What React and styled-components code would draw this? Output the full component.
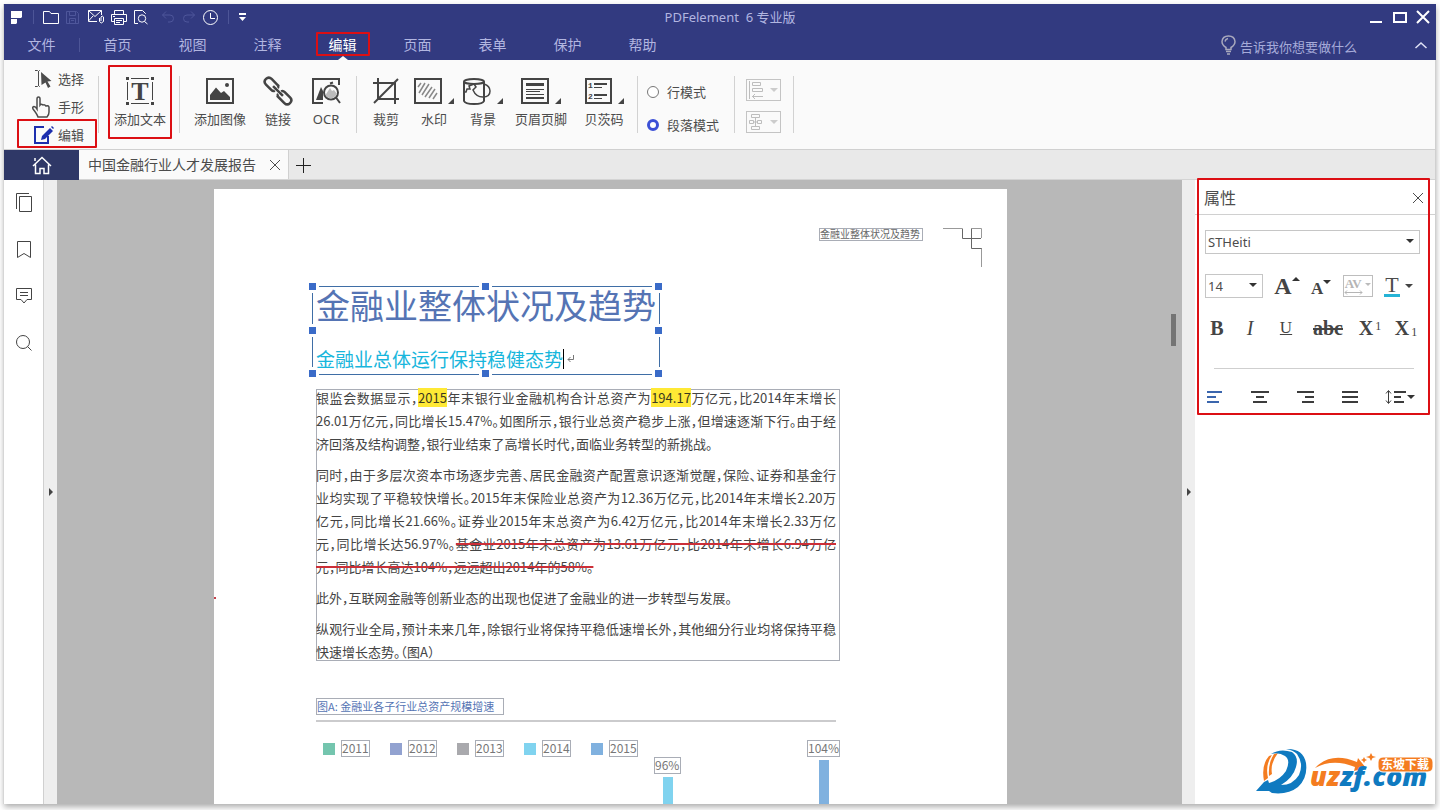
import React from 'react';
import styled, { createGlobalStyle, css } from 'styled-components';

const ui = '"Noto Sans", "Noto Sans CJK SC", sans-serif';
const cjk = '"Noto Sans CJK SC", "Noto Sans", sans-serif';
const serif = '"Liberation Serif", serif';

const GlobalStyle = createGlobalStyle`
  *, *::before, *::after { box-sizing: border-box; }
  body { margin: 0; background: #fff; font-family: ${ui}; color: #4c4c4c; overflow: hidden; }
  button, input, select { font-family: inherit; color: inherit; margin: 0; }
  button { border: 0; background: none; padding: 0; cursor: pointer; }
  svg { display: block; flex: none; overflow: visible; }
`;

/* ---------- shell ---------- */
const Screen = styled.div`
  display: flex;
  height: 100vh;
  padding: 4px 4px 6px;
`;
const AppWindow = styled.div`
  position: relative;
  display: flex;
  flex-direction: column;
  flex: 1;
  min-width: 0;
  background: #fff;
  box-shadow: -1px 0 0 #d6d6d6, 0 3px 6px rgba(0, 0, 0, 0.32);
`;
const WorkArea = styled.div`
  display: flex;
  flex-direction: column;
  flex: 1;
  min-height: 0;
  border-right: 1px solid #d0d0d0;
`;
const Callout = styled.span`
  position: absolute;
  inset: ${(p) => p.$inset || '0'};
  border: 2px solid #dc0f14;
  border-radius: 1px;
  pointer-events: none;
  z-index: 2;
`;

/* ---------- title bar ---------- */
const Header = styled.header`
  background: #323a80;
  color: #b2b6e0;
`;
const TitleRow = styled.div`
  display: grid;
  grid-template-columns: 1fr auto 1fr;
  align-items: center;
  height: 26px;
`;
const QuickBar = styled.div`
  display: flex;
  align-items: center;
  padding-left: 7px;
`;
const QuickButton = styled.button`
  display: flex;
  justify-content: center;
  width: ${(p) => p.$w || 23}px;
  color: #fff;
  &:disabled { color: #4e569b; }
`;
const BarDivider = styled.span`
  width: 1px;
  height: 14px;
  margin: ${(p) => p.$m || '0'};
  background: #4d5597;
`;
const AppTitle = styled.h1`
  margin: 0;
  padding-left: 20px;
  font-size: 13px;
  font-weight: 400;
  line-height: 20px;
  white-space: pre;
`;
const WindowButtons = styled.div`
  display: flex;
  justify-content: flex-end;
  align-items: center;
  gap: 10px;
  padding-right: 7px;
  color: #fff;
`;
const MenuRow = styled.nav`
  display: flex;
  align-items: center;
  height: 30px;
`;
const MenuItem = styled.button`
  position: relative;
  width: 75px;
  height: 30px;
  font-size: 14px;
  line-height: 30px;
  color: ${(p) => (p.$active ? '#fff' : '#b2b6e0')};
  ${(p) => p.$active && css`
    &::after {
      content: '';
      position: absolute;
      left: 50%;
      bottom: 0;
      margin-left: -5px;
      border: 5px solid transparent;
      border-top: 0;
      border-bottom: 4px solid #fafafa;
    }
  `}
`;
const TellMe = styled.label`
  display: flex;
  align-items: center;
  gap: 4px;
  margin-left: auto;
`;
const TellInput = styled.input`
  width: 120px;
  height: 24px;
  margin-top: 3px;
  padding: 0;
  border: 0;
  background: none;
  outline: 0;
  font-size: 13px;
  &::placeholder { color: #a6abd9; opacity: 1; }
`;
const CollapseButton = styled.button`
  margin: 0 9px 0 55px;
  color: #dfe1f5;
`;

/* ---------- ribbon ---------- */
const Ribbon = styled.div`
  display: flex;
  align-items: flex-start;
  height: 90px;
  background: #fafafa;
  border-bottom: 1px solid #d0d0d0;
`;
const RibbonDivider = styled.span`
  width: 1px;
  height: 57px;
  margin-top: 16px;
  background: #d2d2d2;
`;
const ToolColumn = styled.div`
  display: flex;
  flex-direction: column;
  width: 81px;
  margin: 5px 0 0 13px;
  padding-right: 1px;
`;
const ToolRow = styled.button`
  position: relative;
  display: flex;
  align-items: center;
  gap: 4px;
  height: 28px;
  padding-left: 15px;
  font-size: 13px;
  line-height: 20px;
`;
const Group = styled.div`
  display: flex;
  padding: ${(p) => p.$pad};
`;
const RibbonButton = styled.button`
  position: relative;
  display: flex;
  flex-direction: column;
  align-items: center;
  width: ${(p) => p.$w}px;
  height: 74px;
  padding-top: 11px;
  font-size: 13px;
  line-height: 20px;
  white-space: nowrap;
`;
const RibbonIcon = styled.span`
  display: flex;
  align-items: center;
  gap: 6px;
  height: 30px;
  margin-bottom: 3px;
  color: #444;
`;
const DropCorner = styled.span`
  align-self: flex-end;
  margin-bottom: 2px;
  border: 3px solid transparent;
  border-right-color: #444;
  border-bottom-color: #444;
`;
const ModeGroup = styled.fieldset`
  width: 96px;
  margin: 0;
  padding: 15px 0 0 9px;
  border: 0;
`;
const ModeLabel = styled.label`
  display: flex;
  align-items: center;
  gap: 8px;
  height: 33px;
  font-size: 13px;
`;
const Radio = styled.input`
  appearance: none;
  width: 12px;
  height: 12px;
  border: 1px solid #777;
  border-radius: 50%;
  background: #fff;
  &:checked { border: 3px solid #3c50d6; }
`;
const AlignGroup = styled.div`
  display: flex;
  flex-direction: column;
  gap: 10px;
  padding: 19px 12px 0 11px;
`;
const AlignButton = styled.button`
  display: flex;
  align-items: center;
  justify-content: space-between;
  width: 35px;
  height: 22px;
  padding: 0 2px 0 1px;
  border: 1px solid #c4c4c4;
  color: #bdbdbd;
`;
const Caret = styled.span`
  display: block;
  flex: none;
  width: 0;
  margin-top: ${(p) => p.$t || 0}px;
  border: ${(p) => p.$s || 4}px solid transparent;
  border-top-color: ${(p) => p.$c || '#333'};
  border-bottom: 0;
`;

/* ---------- tabs ---------- */
const TabStrip = styled.div`
  display: flex;
  height: 30px;
  background: #e9e9e9;
  border-bottom: 1px solid #d4d4d4;
`;
const HomeTab = styled.button`
  display: flex;
  align-items: center;
  justify-content: center;
  width: 75px;
  height: 30px;
  color: #fff;
  background: #2f3867;
`;
const DocTab = styled.div`
  display: flex;
  align-items: center;
  gap: 14px;
  padding: 0 8px 0 9px;
  background: #fafafa;
  border-right: 1px solid #d0d0d0;
  font-size: 14px;
  line-height: 29px;
`;
const NewTab = styled.button`
  margin-left: 6px;
  color: #222;
`;

/* ---------- main ---------- */
const Main = styled.div`
  display: flex;
  flex: 1;
  min-height: 0;
`;
const Rail = styled.aside`
  display: flex;
  flex-direction: column;
  align-items: center;
  gap: 19px;
  width: 40px;
  padding-top: 8px;
  border-right: 1px solid #d0d0d0;
`;
const RailButton = styled.button`
  display: flex;
  align-items: center;
  justify-content: center;
  width: 28px;
  height: 28px;
  color: #444;
`;
const Gutter = styled.button`
  display: flex;
  align-items: center;
  justify-content: center;
  flex: none;
  width: 13px;
  background: #eee;
`;
const GutterArrow = styled.span`
  border: 4px solid transparent;
  border-left-color: #444;
  border-right: 0;
`;
const Viewer = styled.main`
  display: flex;
  flex: 1;
  min-width: 0;
  background: #b8b8b8;
  overflow: hidden;
`;
const Canvas = styled.div`
  display: flex;
  flex: 1;
  justify-content: center;
  align-items: flex-start;
  padding-top: 9px;
`;
const ScrollTrack = styled.div`
  width: 18px;
  padding: 134px 0 0 7px;
`;
const ScrollThumb = styled.div`
  width: 5px;
  height: 32px;
  background: #747474;
`;
const Page = styled.article`
  position: relative;
  width: 793px;
  padding: 39px 25px 60px 102px;
  background: #fff;
  font-family: ${cjk};
  &::before {
    content: '';
    position: absolute;
    left: 0;
    top: 408px;
    width: 2px;
    height: 2px;
    background: #c5404a;
  }
`;
const PageHead = styled.div`
  display: flex;
  justify-content: flex-end;
  align-items: flex-start;
  gap: 20px;
`;
const Boxed = styled.span`
  display: block;
  border: 1px solid #a9adb6;
  white-space: nowrap;
`;
const RunningTitle = styled(Boxed)`
  width: 104px;
  height: 13px;
  font-size: 10px;
  line-height: 10px;
  color: #666;
`;
const Selection = styled.section`
  position: relative;
  z-index: 0;
  width: 348px;
  height: 89px;
  margin: 19px 0 14px -4px;
  padding-left: 3px;
  border: 1px solid #3f6ea6;
`;
const Handle = styled.span`
  position: absolute;
  z-index: -1;
  left: ${(p) => p.$x};
  top: ${(p) => p.$y};
  width: 7px;
  height: 7px;
  margin: -4px 0 0 -4px;
  background: #3a6bc8;
  box-shadow: 0 0 0 3px #fff;
`;
const DocTitle = styled.h2`
  margin: 0;
  font-size: 34px;
  font-weight: 400;
  line-height: 36px;
  color: #5574b4;
  white-space: nowrap;
`;
const DocSubtitle = styled.h3`
  display: flex;
  align-items: center;
  margin: 26px 0 0;
  font-size: 19px;
  font-weight: 400;
  line-height: 20px;
  color: #18b6dc;
  white-space: nowrap;
`;
const TextCursor = styled.span`
  width: 1px;
  height: 20px;
  margin-right: 3px;
  background: #000;
`;
const BodyBox = styled.section`
  width: 524px;
  padding-right: 3px;
  border: 1px solid #a9adb6;
`;
const BodyText = styled.div`
  display: flex;
  flex-direction: column;
  gap: 8px;
  margin: -4px 0 -3px -1px;
  font-size: 13px;
  line-height: 23px;
  color: #444;
  font-feature-settings: 'halt';
`;
const Para = styled.p`
  margin: 0;
`;
const Line = styled.span`
  display: block;
  text-align: justify;
  text-align-last: ${(p) => (p.$last ? 'left' : 'justify')};
`;
const Highlight = styled.mark`
  color: #3c3a20;
  background: #ffe935;
`;
const Struck = styled.s`
  text-decoration: line-through 2px #cc2f38;
`;
const Figure = styled.figure`
  width: 520px;
  margin: 37px 0 0;
`;
const Caption = styled.figcaption`
  width: 188px;
  height: 17px;
  border: 1px solid #a9adb6;
  font-size: 11px;
  line-height: 15px;
  color: #5574b4;
  white-space: nowrap;
`;
const Rule = styled.hr`
  height: 2px;
  margin: 5px 0 18px;
  border: 0;
  background: #cbcbcd;
`;
const Chart = styled.div`
  display: flex;
  align-items: flex-start;
`;
const Legend = styled.ul`
  display: flex;
  gap: 20px;
  margin: 0;
  padding: 0 0 0 7px;
  list-style: none;
`;
const LegendItem = styled.li`
  display: flex;
  align-items: center;
  gap: 6px;
`;
const Swatch = styled.span`
  width: 12px;
  height: 12px;
  background: ${(p) => p.$c};
`;
const Figures = styled(Boxed)`
  width: ${(p) => p.$w || 29}px;
  height: 17px;
  font-size: 12px;
  line-height: 14px;
  color: #777;
`;
const BarColumn = styled.div`
  display: flex;
  flex-direction: column;
  align-items: center;
  gap: 3px;
  margin: ${(p) => p.$m};
`;
const Bar = styled.div`
  width: 10px;
  height: 180px;
  background: ${(p) => p.$c};
`;

/* ---------- properties ---------- */
const Panel = styled.aside`
  position: relative;
  flex: none;
  width: 240px;
`;
const PanelCallout = styled(Callout)`
  height: 237px;
`;
const PanelHead = styled.div`
  display: flex;
  align-items: center;
  justify-content: space-between;
  height: 35px;
  padding: 2px 12px 0 9px;
  border-bottom: 1px solid #d0d0d0;
`;
const PanelTitle = styled.h2`
  margin: 0;
  font-size: 16px;
  font-weight: 400;
  line-height: 24px;
`;
const PanelBody = styled.div`
  display: flex;
  flex-direction: column;
  padding: 15px 15px 0 10px;
`;
const SelectWrap = styled.label`
  position: relative;
  display: block;
  width: ${(p) => p.$w || '100%'};
`;
const Select = styled.select`
  appearance: none;
  display: block;
  width: 100%;
  height: 24px;
  padding: 0 2px;
  border: 1px solid #c6c6c6;
  border-radius: 0;
  background: #fff;
  font-size: 13px;
`;
const SelectArrow = styled(Caret)`
  position: absolute;
  right: 6px;
  top: 9px;
  pointer-events: none;
`;
const SizeRow = styled.div`
  display: flex;
  align-items: center;
  justify-content: space-between;
  height: 24px;
  margin-top: 20px;
  padding-right: 7px;
`;
const Glyph = styled.button`
  display: flex;
  align-items: ${(p) => p.$align || 'baseline'};
  justify-content: center;
  width: ${(p) => (p.$w ? p.$w + 'px' : 'auto')};
  padding-top: ${(p) => p.$drop || 0}px;
  font-family: ${serif};
  font-size: ${(p) => p.$size || 20}px;
  font-weight: ${(p) => p.$weight || 700};
  line-height: 24px;
  color: #444;
`;
const GlyphMark = styled.span`
  align-self: flex-start;
  margin-top: 3px;
`;
const UpCaret = styled(Caret)`
  border-top: 0;
  border-bottom: 4px solid #333;
`;
const Spacing = styled.button`
  position: relative;
  display: flex;
  gap: 3px;
  width: 30px;
  height: 22px;
  padding: 0 0 0 1px;
  border: 1px solid #bdbdbd;
  color: #b5b5b5;
  font-family: ${serif};
  font-size: 13px;
  font-weight: 700;
  line-height: 15px;
`;
const SpacingArrow = styled.span`
  position: absolute;
  left: 0;
  bottom: 1px;
`;
const ColorButton = styled.button`
  display: flex;
  align-items: center;
  gap: 5px;
  width: 29px;
`;
const ColorLetter = styled.span`
  width: 17px;
  border-bottom: 3px solid #25b3d6;
  font-family: ${serif};
  font-size: 22px;
  line-height: 18px;
`;
const StyleRow = styled.div`
  display: flex;
  align-items: center;
  height: 28px;
  margin: 16px -7px 0 0;
`;
const Small = styled.span`
  font-size: 12px;
  font-weight: 400;
  line-height: 12px;
  align-self: ${(p) => (p.$sub ? 'flex-end' : 'flex-start')};
  margin: 4px 0 2px 2px;
`;
const PanelRule = styled.hr`
  width: 200px;
  height: 1px;
  margin: 26px 0 18px 9px;
  border: 0;
  background: #cfcfcf;
`;
const AlignRow = styled.div`
  display: flex;
  align-items: center;
  justify-content: space-between;
  height: 20px;
  padding: 0 5px 0 2px;
`;
const ParaButton = styled.button`
  display: flex;
  align-items: center;
  gap: 1px;
  color: ${(p) => (p.$on ? '#3b66ad' : '#3c3c3c')};
`;

const Watermark = styled.a`
  position: absolute;
  right: 1px;
  bottom: 5px;
  z-index: 3;
`;

/* ---------- icons ---------- */
const Svg = ({ w, h, sw = 1, children }) => (
  <svg width={w} height={h} viewBox={`0 0 ${w} ${h}`} fill="none" stroke="currentColor" strokeWidth={sw} aria-hidden="true">
    {children}
  </svg>
);
const Cross = ({ s = 10, sw = 1 }) => (
  <Svg w={s} h={s} sw={sw}><path d={`M0 0L${s} ${s}M${s} 0L0 ${s}`} /></Svg>
);
const LinesIcon = ({ w, rows }) => (
  <Svg w={w} h={12} sw={2}>
    {rows.map(([a, b], i) => <path key={i} d={`M${a} ${1 + (i * 10) / (rows.length - 1)}H${b}`} />)}
  </Svg>
);

const RibbonIcons = {
  text: (
    <Svg w={28} h={28}>
      <path d="M5 1.500H23M5 26.500H23M1.500 5V23M26.500 5V23" />
      <path fill="currentColor" stroke="none" d="M0 0h3v3h-3zM25 0h3v3h-3zM0 25h3v3h-3zM25 25h3v3h-3z" />
      <text x="14" y="23" textAnchor="middle" fill="currentColor" stroke="none" fontFamily="Liberation Serif, serif" fontWeight="700" fontSize="26">T</text>
    </Svg>
  ),
  image: (
    <Svg w={28} h={26} sw={2}>
      <path d="M1 1H27V25H1Z" />
      <path fill="currentColor" stroke="none" d="M4 22V17L10 9.500L15 15L18 13L24 19V22Z" />
      <circle cx="21" cy="7" r="2" fill="currentColor" stroke="none" />
    </Svg>
  ),
  link: (
    <Svg w={28} h={28} sw={2.5}>
      <g transform="rotate(45 14 14)">
        <path d="M10 10.500V10Q10 10 8.500 10H1Q-3 10 -3 14Q-3 18 1 18H8.500Q11 18 11.500 16" />
        <path d="M18 17.500V18H27Q31 18 31 14Q31 10 27 10H19.500Q17 10 16.500 12" />
        <path d="M7 14H21" />
        <path d="M10 10Q12 11 12 12M18 18Q16 17 16 16" />
      </g>
    </Svg>
  ),
  ocr: (
    <Svg w={28} h={26} sw={2}>
      <path d="M11 25H1V1H27V7" />
      <path fill="currentColor" stroke="none" d="M4 22L9 9L11 13V22Z" />
      <circle cx="19" cy="14.500" r="7" fill="#fafafa" />
      <path fill="#bbb" stroke="none" d="M13.500 17L18 10L20 13L22 12L25 16Q22 20.500 18 20.500Q15 20 13.500 17Z" />
      <path d="M24 19.500L28 25M18 5.500L21 4.500" />
    </Svg>
  ),
  crop: (
    <Svg w={26} h={26} sw={2}>
      <path d="M0 5H22V26M5 0V21H26" />
      <path d="M1 25L25 1" />
    </Svg>
  ),
  watermark: (
    <Svg w={28} h={26} sw={2}>
      <path d="M1 1H27V25H1Z" />
      <path stroke="#888" strokeWidth="1.500" d="M4 9L7 5M5 15L11 5M8 17L15 6M11 19L18 9M15 20L21 11M19 21L23 15" />
    </Svg>
  ),
  background: (
    <Svg w={28} h={27} sw={2}>
      <ellipse cx="11" cy="3.500" rx="10" ry="2.500" />
      <path d="M1 3.500V23Q2 26 11 26Q20 26 21 23V3.500" />
      <path d="M1 14H3L4 11H7L6 8L11 6L13 9L10 12Q13 19 20 19Q27 19 27 13Q27 8 21 6" strokeWidth="1.500" />
    </Svg>
  ),
  header: (
    <Svg w={28} h={26} sw={2}>
      <path d="M1 1H27V25H1Z" />
      <path strokeWidth="3" d="M5 6.500H23" />
      <path strokeWidth="1" d="M5 11.500H23M5 13.500H19M5 16.500H23" />
      <path d="M5 20H23" />
    </Svg>
  ),
  bates: (
    <Svg w={27} h={26} sw={2}>
      <path d="M1 1H26V25H1Z" />
      <path d="M9 6H22M9 17H22" />
      <path strokeWidth="1" d="M9 9.500H17M9 20.500H17" />
      <g fill="currentColor" stroke="none" fontFamily="Liberation Mono, monospace" fontWeight="700" fontSize="8">
        <text x="3" y="10">1</text>
        <text x="3" y="21">2</text>
      </g>
    </Svg>
  ),
};

const QuickIcons = {
  logo: <Svg w={11} h={13}><path fill="#fff" stroke="none" d="M0 0H11V6L10 7H0ZM0 8H6V12L5 13H0Z" /></Svg>,
  open: <Svg w={16} h={13}><path d="M.5 12.500V.5H6.500L8 2.500H15.500V12.500Z" /></Svg>,
  save: <Svg w={13} h={13}><path d="M.5 .5H10.500L12.500 2.500V12.500H.5ZM3.500 .5V4.500H9.500V.5M3.500 12.500V7.500H9.500V12.500M5 9.500H8" /></Svg>,
  mail: <Svg w={16} h={14}><path d="M9 11.500H.5V.5H13.500V5M.5 .5L7 6.500L13.500 .5M.5 11L5 6M11.500 8V11.500Q13 14.500 15.500 11.500V7Q14 5 13 7V11" /></Svg>,
  print: <Svg w={16} h={15}><path d="M3.500 4V.5H12.500V4M3 11.500H.5V4.500H15.500V11.500H13M3.500 8.500H12.500V14.500H3.500ZM5 10.500H11M5 12.500H9M2 6.500H4" /></Svg>,
  find: <Svg w={14} h={14}><path d="M4 13.500H.5V.5H8.500L11.500 3.500V4" /><circle cx="8" cy="8.500" r="3.700" /><path d="M10.500 11.500L13.500 14" /></Svg>,
  undo: <Svg w={12} h={12}><path d="M4 .5L.5 4L4 7.500M.5 4H8Q11.500 4 11.500 7.500Q11.500 11 8 11H6" /></Svg>,
  redo: <Svg w={12} h={12}><path d="M8 .5L11.500 4L8 7.500M11.500 4H4Q.5 4 .5 7.500Q.5 11 4 11H6" /></Svg>,
  clock: <Svg w={15} h={15}><circle cx="7.500" cy="7.500" r="7" /><path d="M7.500 3V8.500H12" /></Svg>,
  more: <Svg w={7} h={8}><path d="M0 1H7" strokeWidth="2" /><path fill="currentColor" stroke="none" d="M0 4H7L3.500 8Z" /></Svg>,
};

const quick = [
  ['打开', 'open', 23], ['保存', 'save', 20, true], ['邮件', 'mail', 28], ['打印', 'print', 18],
  ['查找', 'find', 26], ['撤销', 'undo', 27, true], ['重做', 'redo', 15, true], ['历史', 'clock', 29],
];
const menus = ['首页', '视图', '注释', '编辑', '页面', '表单', '保护', '帮助'];
const legend = [['2011', '#74c5ae'], ['2012', '#92a2d0'], ['2013', '#a9a9ad'], ['2014', '#80d3ef'], ['2015', '#80b1df']];
const handles = [['0', '0'], ['50%', '0'], ['100%', '0'], ['0', '50%'], ['100%', '50%'], ['0', '100%'], ['50%', '100%'], ['100%', '100%']];

const Tool = ({ icon, label, w, drop, callout }) => (
  <RibbonButton $w={w}>
    <RibbonIcon>{RibbonIcons[icon]}{drop && <DropCorner />}</RibbonIcon>
    {label}
    {callout && <Callout />}
  </RibbonButton>
);

function TitleBar() {
  return (
    <Header>
      <TitleRow>
        <QuickBar>
          {QuickIcons.logo}
          <BarDivider $m="0 5px 0 11px" />
          {quick.map(([label, icon, w, off]) => (
            <QuickButton key={label} $w={w} disabled={off} aria-label={label}>{QuickIcons[icon]}</QuickButton>
          ))}
          <BarDivider $m="0 0 0 3px" />
          <QuickButton $w={27} aria-label="更多">{QuickIcons.more}</QuickButton>
        </QuickBar>
        <AppTitle>{'PDFelement  6 专业版'}</AppTitle>
        <WindowButtons>
          <button aria-label="最小化"><Svg w={14} h={12} sw={2}><path d="M1 11H13" /></Svg></button>
          <button aria-label="最大化"><Svg w={14} h={11} sw={2}><path d="M1 1H13V10H1Z" /></Svg></button>
          <button aria-label="关闭"><Cross s={12} sw={2} /></button>
        </WindowButtons>
      </TitleRow>
      <MenuRow>
        <MenuItem>文件</MenuItem>
        <BarDivider />
        {menus.map((m) => (
          <MenuItem key={m} $active={m === '编辑'}>
            {m}
            {m === '编辑' && <Callout $inset="2px 10px 4px 11px" />}
          </MenuItem>
        ))}
        <TellMe>
          <Svg w={15} h={20}>
            <path stroke="#a9a9bd" strokeWidth="1.500" d="M5 14.500V12.500Q1 10 1 6.500Q1.500 1 7.500 1Q13.500 1 14 6.500Q14 10 10 12.500V14.500ZM4 6.500Q4.500 4 7 3.500M5 16.500H10M6 19H9" />
          </Svg>
          <TellInput placeholder="告诉我你想要做什么" aria-label="告诉我你想要做什么" />
        </TellMe>
        <CollapseButton aria-label="收起"><Svg w={12} h={7}><path strokeWidth="1.500" d="M.5 6L6 1L11.500 6" /></Svg></CollapseButton>
      </MenuRow>
    </Header>
  );
}

function RibbonBar() {
  return (
    <Ribbon>
      <ToolColumn>
        <ToolRow>
          <Svg w={22} h={20}>
            <path d="M3 1.500H5.500L6.500 2.500L7.500 1.500H8M6.500 2V17M3 17.500H5.500L6.500 16.500L7.500 17.500H8" />
            <path fill="currentColor" stroke="none" d="M9 3L19.500 12L15.500 12.500L18.500 17.500L16 19L13.500 13.500L9.500 16Z" />
          </Svg>
          选择
        </ToolRow>
        <ToolRow>
          <Svg w={22} h={22}>
            <path strokeWidth="1.500" d="M5 13V3Q5 1 6.500 1Q8 1 8 3V9Q9 7.500 11 9Q12.500 8 14 10Q16 9 17 11V16Q17 19 15 21H6Q5 18 1 13Q0 11 2 10.500Q3.500 10.500 5 13Z" />
          </Svg>
          手形
        </ToolRow>
        <ToolRow>
          <Svg w={22} h={20}>
            <path stroke="#1d2fae" strokeWidth="2" d="M12 2H3V18H16V11" />
            <path fill="#1d2fae" stroke="none" d="M9 15L10 11L18 3L21 6L13 14ZM19 2L20 1L22 3L21 4Z" />
          </Svg>
          编辑
          <Callout $inset="-2px 0 1px 0" />
        </ToolRow>
      </ToolColumn>
      <RibbonDivider />
      <Group $pad="5px 7px 0 9px">
        <Tool icon="text" label="添加文本" w={64} callout />
      </Group>
      <RibbonDivider />
      <Group $pad="5px 7px 0 7px">
        <Tool icon="image" label="添加图像" w={66} />
        <Tool icon="link" label="链接" w={50} />
        <Tool icon="ocr" label="OCR" w={46} />
      </Group>
      <RibbonDivider />
      <Group $pad="5px 4px 0 6px">
        <Tool icon="crop" label="裁剪" w={46} />
        <Tool icon="watermark" label="水印" w={50} drop />
        <Tool icon="background" label="背景" w={48} drop />
        <Tool icon="header" label="页眉页脚" w={68} drop />
        <Tool icon="bates" label="贝茨码" w={58} drop />
      </Group>
      <RibbonDivider />
      <ModeGroup>
        <ModeLabel><Radio type="radio" name="mode" />行模式</ModeLabel>
        <ModeLabel><Radio type="radio" name="mode" defaultChecked />段落模式</ModeLabel>
      </ModeGroup>
      <RibbonDivider />
      <AlignGroup>
        <AlignButton aria-label="对齐">
          <Svg w={18} h={18}><path d="M1.500 0V18M4.500 1.500H12.500V4.500H4.500ZM4.500 7.500H14.500V10.500H4.500ZM4 15.500H15M7 13L4.500 15.500L7 18" /></Svg>
          <Caret $c="#ccc" />
        </AlignButton>
        <AlignButton aria-label="分布">
          <Svg w={18} h={18}><path d="M3.500 1.500H11.500V4.500H3.500ZM1.500 7.500H5.500V10.500H1.500ZM9.500 7.500H13.500V10.500H9.500ZM3.500 13.500H11.500V16.500H3.500ZM7.500 4.500V13.500M5.500 9H9.500" /></Svg>
          <Caret $c="#ccc" />
        </AlignButton>
      </AlignGroup>
      <RibbonDivider />
    </Ribbon>
  );
}

function DocumentPage() {
  return (
    <Page>
      <PageHead>
        <RunningTitle>金融业整体状况及趋势</RunningTitle>
        <Svg w={39} h={39}>
          <path stroke="#999" d="M0 .5H19M38.500 20V39M28.500 .5H38.500V10" />
          <path stroke="#666" d="M19.500 .5V10.500H38M28.500 .5V20.500H38.500" />
        </Svg>
      </PageHead>
      <Selection>
        {handles.map(([x, y]) => <Handle key={x + y} $x={x} $y={y} />)}
        <DocTitle>金融业整体状况及趋势</DocTitle>
        <DocSubtitle>
          金融业总体运行保持稳健态势<TextCursor />
          <Svg w={7} h={8}><path stroke="#777" d="M6.500 0V4.500H1M3.500 2L1 4.500L3.500 7" /></Svg>
        </DocSubtitle>
      </Selection>
      <BodyBox>
        <BodyText>
          <Para>
            <Line>银监会数据显示，<Highlight>2015</Highlight>年末银行业金融机构合计总资产为<Highlight>194.17</Highlight>万亿元，比2014年末增长</Line>
            <Line>26.01万亿元，同比增长15.47%。如图所示，银行业总资产稳步上涨，但增速逐渐下行。由于经</Line>
            <Line $last>济回落及结构调整，银行业结束了高增长时代，面临业务转型的新挑战。</Line>
          </Para>
          <Para>
            <Line>同时，由于多层次资本市场逐步完善、居民金融资产配置意识逐渐觉醒，保险、证券和基金行</Line>
            <Line>业均实现了平稳较快增长。2015年末保险业总资产为12.36万亿元，比2014年末增长2.20万</Line>
            <Line>亿元，同比增长21.66%。证券业2015年末总资产为6.42万亿元，比2014年末增长2.33万亿</Line>
            <Line>元，同比增长达56.97%。<Struck>基金业2015年末总资产为13.61万亿元，比2014年末增长6.94万亿</Struck></Line>
            <Line $last><Struck>元，同比增长高达104%，远远超出2014年的58%。</Struck></Line>
          </Para>
          <Para>
            <Line $last>此外，互联网金融等创新业态的出现也促进了金融业的进一步转型与发展。</Line>
          </Para>
          <Para>
            <Line>纵观行业全局，预计未来几年，除银行业将保持平稳低速增长外，其他细分行业均将保持平稳</Line>
            <Line $last>快速增长态势。（图A）</Line>
          </Para>
        </BodyText>
      </BodyBox>
      <Figure>
        <Caption>图A: 金融业各子行业总资产规模增速</Caption>
        <Rule />
        <Chart>
          <Legend>
            {legend.map(([year, c]) => (
              <LegendItem key={year}><Swatch $c={c} /><Figures>{year}</Figures></LegendItem>
            ))}
          </Legend>
          <BarColumn $m="17px 0 0 16px"><Figures $w={27}>96%</Figures><Bar $c="#80d3ef" /></BarColumn>
          <BarColumn $m="0 -4px 0 auto"><Figures $w={33}>104%</Figures><Bar $c="#80b1df" /></BarColumn>
        </Chart>
      </Figure>
    </Page>
  );
}

function Properties() {
  return (
    <Panel>
      <PanelHead>
        <PanelTitle>属性</PanelTitle>
        <button aria-label="关闭属性"><Cross /></button>
      </PanelHead>
      <PanelBody>
        <SelectWrap>
          <Select aria-label="字体"><option>STHeiti</option></Select>
          <SelectArrow />
        </SelectWrap>
        <SizeRow>
          <SelectWrap $w="58px">
            <Select aria-label="字号"><option>14</option></Select>
            <SelectArrow />
          </SelectWrap>
          <Glyph $size={24} aria-label="增大字号">A<GlyphMark><UpCaret /></GlyphMark></Glyph>
          <Glyph $size={17} $drop={5} aria-label="减小字号">A<GlyphMark><Caret /></GlyphMark></Glyph>
          <Spacing aria-label="字间距">
            AV
            <SpacingArrow><Svg w={19} h={5}><path d="M1 2.500H18M3 .5L1 2.500L3 4.500M16 .5L18 2.500L16 4.500" /></Svg></SpacingArrow>
            <Caret $c="#bbb" $s={3} $t={7} />
          </Spacing>
          <ColorButton aria-label="字体颜色"><ColorLetter>T</ColorLetter><Caret $c="#444" /></ColorButton>
        </SizeRow>
        <StyleRow>
          <Glyph $w={24}>B</Glyph>
          <Glyph $w={42} $weight={400}><i>I</i></Glyph>
          <Glyph $w={30} $weight={400} $size={17}><u>U</u></Glyph>
          <Glyph $w={54}><s>abc</s></Glyph>
          <Glyph $w={30} $align="stretch">X<Small>1</Small></Glyph>
          <Glyph $w={42} $align="stretch">X<Small $sub>1</Small></Glyph>
        </StyleRow>
        <PanelRule />
        <AlignRow>
          <ParaButton $on aria-label="左对齐"><LinesIcon w={16} rows={[[0, 15], [0, 9], [0, 12]]} /></ParaButton>
          <ParaButton aria-label="居中"><LinesIcon w={18} rows={[[0, 18], [5, 13], [2, 16]]} /></ParaButton>
          <ParaButton aria-label="右对齐"><LinesIcon w={17} rows={[[0, 17], [8, 17], [5, 17]]} /></ParaButton>
          <ParaButton aria-label="两端对齐"><LinesIcon w={16} rows={[[0, 16], [0, 16], [0, 16]]} /></ParaButton>
          <ParaButton aria-label="行距">
            <Svg w={20} h={14}>
              <path d="M2.500 1V13M0 3.500L2.500 .5L5 3.500M0 10.500L2.500 13.500L5 10.500" />
              <path strokeWidth="2" d="M8 2H20M8 7H15M8 12H18" />
            </Svg>
            <Caret />
          </ParaButton>
        </AlignRow>
      </PanelBody>
      <PanelCallout $inset="-2px 5px auto 2px" />
    </Panel>
  );
}

const Brand = () => (
  <Watermark href="#" aria-label="uzzf.com 东坡下载">
    <svg width="180" height="52" viewBox="0 0 180 52" aria-hidden="true">
      <path fill="#f47c20" d="M14 9Q6 18 9 34L13 31Q10 18 17 8ZM19 7Q13 16 14 29L17 27Q15 16 23 6Z" />
      <path fill="#0f7ac0" d="M16 7Q25 1 37 5Q44 10 41 20Q38 31 26 38Q38 38 44 28Q49 17 42 7Q38 3 31 2Q48 1 51 16Q53 31 43 40Q33 48 17 46L14 44L1 44L9 35L13 33L14 36Q25 33 31 24Q36 13 30 9Q24 5 16 7Z" />
      <path fill="#f47c20" d="M60 21Q76 4 102 15L103 11L111 21L99 24L100 20Q78 11 60 21Z" />
      <g fontFamily="Open Sans, sans-serif" fontSize="27" fontWeight="800" fontStyle="italic">
        <text x="55" y="39"><tspan fill="#f47c20">uz</tspan><tspan fill="#0f7ac0">zf.com</tspan></text>
      </g>
      <rect x="123" y="10" width="55" height="15" rx="5" fill="#f47c20" stroke="#fff" />
      <text x="126" y="22" fill="#fff" fontFamily="Noto Sans CJK SC, sans-serif" fontSize="12" fontWeight="700">东坡下载</text>
      <path fill="#f47c20" d="M116 6L117.500 9L121 10L117.500 11L116 14L114.500 11L111 10L114.500 9ZM109 10L110 12L112 13L110 14L109 16L108 14L106 13L108 12Z" />
    </svg>
  </Watermark>
);

export default function App() {
  return (
    <>
      <GlobalStyle />
      <Screen>
        <AppWindow>
          <TitleBar />
          <WorkArea>
            <RibbonBar />
            <TabStrip>
              <HomeTab aria-label="主页">
                <Svg w={20} h={19}><path strokeWidth="1.500" d="M1 10L10 1.500L19 10M3.500 8.500V17.500H8V12.500H12V17.500H16.500V8.500M3 5V2" /></Svg>
              </HomeTab>
              <DocTab>
                中国金融行业人才发展报告
                <button aria-label="关闭标签"><Cross /></button>
              </DocTab>
              <NewTab aria-label="新标签"><Svg w={16} h={16}><path d="M8.500 1V16M1 8.500H16" /></Svg></NewTab>
            </TabStrip>
            <Main>
              <Rail>
                <RailButton aria-label="缩略图"><Svg w={16} h={19}><path d="M.5 16V.5H13M3.500 3.500H15.500V18.500H3.500Z" /></Svg></RailButton>
                <RailButton aria-label="书签"><Svg w={14} h={17}><path d="M.5 .5H13.500V16.500L7 12.500L.5 16.500Z" /></Svg></RailButton>
                <RailButton aria-label="注释"><Svg w={16} h={16}><path d="M.5 .5H15.500V11.500H11L8 15L5 11.500H.5ZM4 4.500H12M4 7.500H12" /></Svg></RailButton>
                <RailButton aria-label="搜索"><Svg w={16} h={16}><circle cx="7" cy="7" r="6.500" /><path d="M11.500 11.500L15.500 15.500" /></Svg></RailButton>
              </Rail>
              <Gutter aria-label="展开左栏"><GutterArrow /></Gutter>
              <Viewer>
                <Canvas><DocumentPage /></Canvas>
                <ScrollTrack><ScrollThumb /></ScrollTrack>
              </Viewer>
              <Gutter aria-label="收起右栏"><GutterArrow /></Gutter>
              <Properties />
            </Main>
          </WorkArea>
          <Brand />
        </AppWindow>
      </Screen>
    </>
  );
}
